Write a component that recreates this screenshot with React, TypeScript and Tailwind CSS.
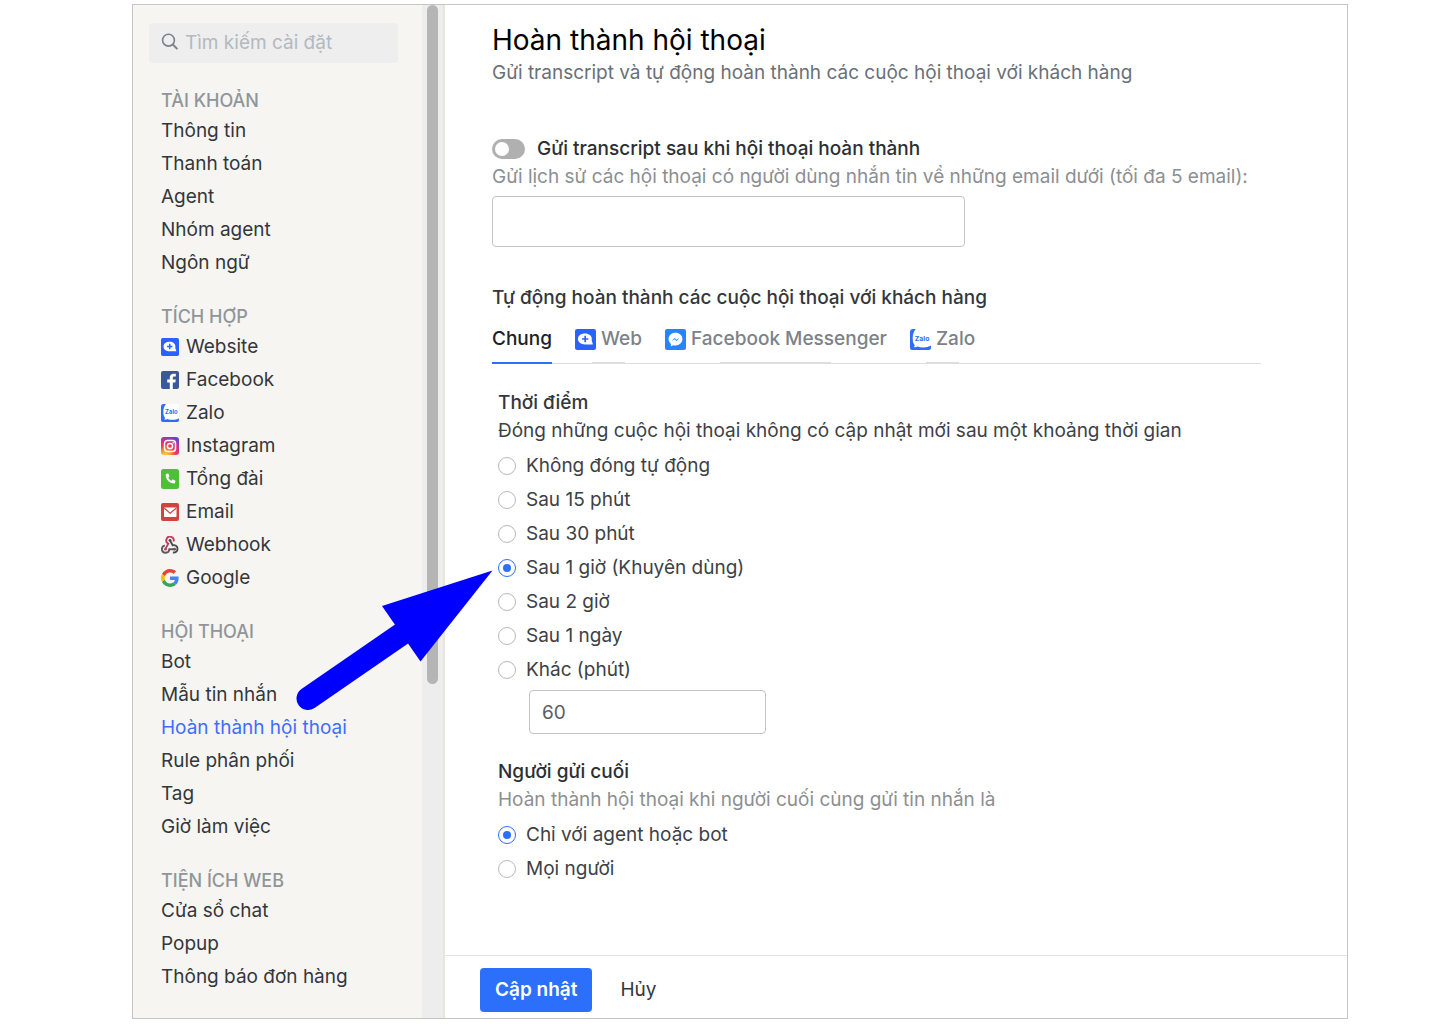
import { useState } from "react";
import type { ReactNode } from "react";

type NavItem = { label: string; icon?: ReactNode };
type NavGroup = { title: string; items: NavItem[] };

function ChatPlusIcon({ className }: { className: string }) {
	return (
		<svg viewBox="0 0 20 20" className={className} aria-hidden="true">
			<rect width="20" height="20" rx="2" fill="#2962ff" />
			<path d="M9.6 4.2c3.800 0 6.400 2.200 6.400 5.200 0 1.200-.2 2 .3 3 .3.700.7 1.200.7 2.400H9.600c-4 0-6.800-2.200-6.800-5.400s2.800-5.200 6.800-5.200z" fill="#fff" />
			<path d="M9.7 6.500v6M6.700 9.500h6" stroke="#2962ff" strokeWidth="1.6" />
		</svg>
	);
}

function ZaloIcon({ className }: { className: string }) {
	return (
		<svg viewBox="0 0 20 20" className={className} aria-hidden="true">
			<path d="M3 0h3L10 10 20 15.500V18a2 2 0 0 1-2 2H2a2 2 0 0 1-2-2V3a3 3 0 0 1 3-3z" fill="#2f6df6" />
			<path d="M5.500 0H18a2 2 0 0 1 2 2v13.800c-3.500 2.200-9 2.300-13 .8-.9.500-2.300.9-3.700.6.700-.4 1.200-.9 1.300-1.600C3.200 14 2.600 12 2.600 9 2.600 5.500 3.400 2.500 5.500 0z" fill="#fff" />
			<text x="11.5" y="11" fontSize="6.500" fontWeight="700" textAnchor="middle" fill="#2f6df6">Zalo</text>
		</svg>
	);
}

function MessengerIcon({ className }: { className: string }) {
	return (
		<svg viewBox="0 0 20 20" className={className} aria-hidden="true">
			<rect width="20" height="20" rx="2" fill="#2684ff" />
			<path d="M10 3.600c-3.800 0-6.600 2.600-6.600 6 0 1.900.9 3.500 2.200 4.600v2.400l2.200-1.200c.7.200 1.400.3 2.200.3 3.800 0 6.600-2.700 6.600-6.100s-2.800-6-6.600-6z" fill="#fff" />
			<path d="M6.300 11.500l2.800-2.900 1.800 1.700 2.900-1.700-2.800 2.900-1.800-1.700z" fill="#2684ff" />
		</svg>
	);
}

function FacebookIcon() {
	return (
		<svg viewBox="0 0 18 18" className="size-[18px]" aria-hidden="true">
			<rect width="18" height="18" rx="2" fill="#3b5998" />
			<path d="M8.800 18v-6.500H6.200V8.500h2.600V6.600c0-2.500 1.500-3.900 3.800-3.900h2.200v2.800h-1.500c-1.100 0-1.500.6-1.500 1.500v1.500h3l-.5 3h-2.500V18z" fill="#fff" />
		</svg>
	);
}

function InstagramIcon() {
	return (
		<svg viewBox="0 0 18 18" className="size-[18px]" aria-hidden="true">
			<defs>
				<radialGradient id="ig" cx="0.25" cy="1.05" r="1.150">
					<stop offset="0" stopColor="#ffd45c" />
					<stop offset="0.250" stopColor="#ff9a3d" />
					<stop offset="0.5" stopColor="#f5384e" />
					<stop offset="0.750" stopColor="#cc2f93" />
					<stop offset="1" stopColor="#5b46d8" />
				</radialGradient>
			</defs>
			<rect width="18" height="18" rx="3" fill="url(#ig)" />
			<rect x="3.500" y="3.500" width="11" height="11" rx="3" fill="none" stroke="#fff" strokeWidth="1.500" />
			<circle cx="9" cy="9" r="2.600" fill="none" stroke="#fff" strokeWidth="1.500" />
			<circle cx="12.200" cy="5.800" r="0.800" fill="#fff" />
		</svg>
	);
}

function PhoneIcon() {
	return (
		<svg viewBox="0 0 18 20" className="h-5 w-[18px]" aria-hidden="true">
			<rect width="18" height="20" rx="2.500" fill="#4fbf3a" />
			<path d="M5.200 5.100l1.600-.5c.4-.1.700.1.800.4l.8 2c.1.300 0 .6-.2.800l-1 .8c.7 1.500 1.800 2.600 3.200 3.200l.8-1c.2-.3.500-.3.800-.2l2 .9c.3.100.4.400.4.800l-.5 1.600c-.1.400-.4.600-.7.600-4.600 0-8.500-3.900-8.500-8.700 0-.4.200-.6.500-.7z" fill="#fff" />
		</svg>
	);
}

function EmailIcon() {
	return (
		<svg viewBox="0 0 18 18" className="size-[18px]" aria-hidden="true">
			<rect width="18" height="18" rx="2" fill="#d0433f" />
			<rect x="3" y="4.500" width="12.500" height="9.500" rx="0.800" fill="#fff" />
			<path d="M3.300 5.200l5.900 5 5.900-5" fill="none" stroke="#d0433f" strokeWidth="1.200" />
		</svg>
	);
}

function WebhookIcon() {
	return (
		<svg viewBox="0 0 18 18" className="size-[18px]" aria-hidden="true" fill="none" strokeWidth="1.900">
			<path d="M12.500 5.500A3.700 3.700 0 1 0 7.300 7.600L4.600 12.600" stroke="#c73a63" />
			<path d="M9 4.400l2.700 4.900a3.700 3.700 0 1 1 .2 7.100" stroke="#4b4b4b" />
			<path d="M3.800 9.500a3.700 3.700 0 1 0 4.500 3.800h5.200" stroke="#5a5a5a" />
			<circle cx="4.500" cy="13.200" r="1.400" fill="#c73a63" stroke="none" />
			<circle cx="9" cy="4.300" r="1.400" fill="#4b4b4b" stroke="none" />
			<circle cx="13.600" cy="13.200" r="1.400" fill="#5a5a5a" stroke="none" />
		</svg>
	);
}

function GoogleIcon() {
	return (
		<svg viewBox="0 0 48 48" className="size-[18px]" aria-hidden="true">
			<path fill="#EA4335" d="M24 9.500c3.540 0 6.710 1.220 9.210 3.600l6.850-6.850C35.900 2.380 30.470 0 24 0 14.620 0 6.510 5.380 2.560 13.220l7.980 6.190C12.430 13.720 17.740 9.500 24 9.500z" />
			<path fill="#4285F4" d="M46.980 24.550c0-1.570-.15-3.090-.38-4.550H24v9.020h12.940c-.58 2.960-2.260 5.480-4.780 7.180l7.730 6c4.510-4.180 7.090-10.360 7.090-17.650z" />
			<path fill="#FBBC05" d="M10.530 28.590c-.48-1.450-.76-2.990-.76-4.590s.27-3.140.76-4.590l-7.980-6.190C.92 16.460 0 20.120 0 24c0 3.880.92 7.540 2.560 10.780l7.970-6.190z" />
			<path fill="#34A853" d="M24 48c6.480 0 11.930-2.130 15.890-5.810l-7.730-6c-2.150 1.450-4.920 2.300-8.160 2.300-6.260 0-11.570-4.220-13.470-9.910l-7.980 6.190C6.510 42.620 14.620 48 24 48z" />
		</svg>
	);
}

function SearchIcon() {
	return (
		<svg viewBox="0 0 18 20" className="h-5 w-[18px] shrink-0" aria-hidden="true" fill="none" stroke="#7b8288" strokeWidth="1.600">
			<circle cx="7.500" cy="7.200" r="5.900" />
			<path d="M11.600 11.300l4.800 4.800" strokeWidth="2" />
		</svg>
	);
}

const navGroups: NavGroup[] = [
	{
		title: "TÀI KHOẢN",
		items: [{ label: "Thông tin" }, { label: "Thanh toán" }, { label: "Agent" }, { label: "Nhóm agent" }, { label: "Ngôn ngữ" }],
	},
	{
		title: "TÍCH HỢP",
		items: [
			{ label: "Website", icon: <ChatPlusIcon className="size-[18px]" /> },
			{ label: "Facebook", icon: <FacebookIcon /> },
			{ label: "Zalo", icon: <ZaloIcon className="size-[18px]" /> },
			{ label: "Instagram", icon: <InstagramIcon /> },
			{ label: "Tổng đài", icon: <PhoneIcon /> },
			{ label: "Email", icon: <EmailIcon /> },
			{ label: "Webhook", icon: <WebhookIcon /> },
			{ label: "Google", icon: <GoogleIcon /> },
		],
	},
	{
		title: "HỘI THOẠI",
		items: [
			{ label: "Bot" },
			{ label: "Mẫu tin nhắn" },
			{ label: "Hoàn thành hội thoại" },
			{ label: "Rule phân phối" },
			{ label: "Tag" },
			{ label: "Giờ làm việc" },
		],
	},
	{
		title: "TIỆN ÍCH WEB",
		items: [{ label: "Cửa sổ chat" }, { label: "Popup" }, { label: "Thông báo đơn hàng" }],
	},
];

const tabs: NavItem[] = [
	{ label: "Chung" },
	{ label: "Web", icon: <ChatPlusIcon className="size-[21px]" /> },
	{ label: "Facebook Messenger", icon: <MessengerIcon className="size-[21px]" /> },
	{ label: "Zalo", icon: <ZaloIcon className="size-[21px]" /> },
];

const closeOptions = [
	"Không đóng tự động",
	"Sau 15 phút",
	"Sau 30 phút",
	"Sau 1 giờ (Khuyên dùng)",
	"Sau 2 giờ",
	"Sau 1 ngày",
	"Khác (phút)",
];

const senderOptions = ["Chỉ với agent hoặc bot", "Mọi người"];

function Sidebar() {
	return (
		<aside className="flex w-[312px] shrink-0 border-r-2 border-[#e8e4de] bg-[#f6f5f1]">
			<div className="flex-1 pt-[18px] pl-4">
				<label className="mr-6 flex h-10 items-center gap-1.5 rounded bg-[#eeeeee] px-3">
					<SearchIcon />
					<input
						type="search"
						aria-label="Tìm kiếm cài đặt"
						placeholder="Tìm kiếm cài đặt"
						className="w-full min-w-0 bg-transparent outline-none placeholder:text-[#b3b9c0]"
					/>
				</label>
				<nav className="mt-6 flex flex-col gap-6 pl-3">
					{navGroups.map((group) => (
						<div key={group.title}>
							<h2 className="text-[18px] leading-[27px] font-medium text-[#8f969b]">{group.title}</h2>
							<ul>
								{group.items.map((item) => (
									<li key={item.label}>
										<a
											href="#"
											className={`flex h-[33px] items-center gap-[7px] ${item.label === "Hoàn thành hội thoại" ? "text-[#3f6dff]" : "text-[#33373b]"}`}
										>
											{item.icon}
											{item.label}
										</a>
									</li>
								))}
							</ul>
						</div>
					))}
				</nav>
			</div>
			<div className="flex w-[21px] flex-col bg-[#ededed] px-[5px]">
				<div className="h-[67%] rounded-full bg-[#b5b5b5]" />
			</div>
		</aside>
	);
}

type RadioListProps = { name: string; options: string[]; value: string; onChange: (v: string) => void };

function RadioList({ name, options, value, onChange }: RadioListProps) {
	return (
		<div>
			{options.map((option) => (
				<label key={option} className="flex h-[34px] items-center gap-[10px] text-[#3d4146]">
					<input
						type="radio"
						name={name}
						checked={value === option}
						onChange={() => onChange(option)}
						className="grid size-[18px] appearance-none place-content-center rounded-full border border-[#b9b9b9] bg-white before:size-2 before:rounded-full checked:border-[#2b70fa] checked:before:bg-[#2b70fa]"
					/>
					{option}
				</label>
			))}
		</div>
	);
}

export default function App() {
	const [sendTranscript, setSendTranscript] = useState(false);
	const [emails, setEmails] = useState("");
	const [activeTab, setActiveTab] = useState("Chung");
	const [closeAfter, setCloseAfter] = useState(closeOptions[3]);
	const [minutes, setMinutes] = useState("60");
	const [lastSender, setLastSender] = useState(senderOptions[0]);

	return (
		<div className="flex min-h-screen bg-white pt-1 pr-[92px] pb-[5px] pl-[132px] font-['Inter',sans-serif] text-[19px] leading-7">
			<div className="relative flex w-full border border-[#c6c6c6]">
				<Sidebar />
				<main className="flex min-w-0 flex-1 flex-col">
					<div className="flex-1 pt-4 pr-[86px] pl-[47px]">
						<h1 className="text-[28px] leading-[38px] text-black">Hoàn thành hội thoại</h1>
						<p className="text-[#6a7076]">Gửi transcript và tự động hoàn thành các cuộc hội thoại với khách hàng</p>

						<label className="mt-12 flex items-center gap-3 font-medium text-[#2b2f33]">
							<input
								type="checkbox"
								role="switch"
								checked={sendTranscript}
								onChange={(e) => setSendTranscript(e.target.checked)}
								className="flex h-5 w-[33px] appearance-none items-center rounded-full bg-[#b0b0b0] px-[3px] before:size-[14px] before:rounded-full before:bg-white checked:justify-end checked:bg-[#2b70fa]"
							/>
							Gửi transcript sau khi hội thoại hoàn thành
						</label>
						<label htmlFor="emails" className="block text-[#8c8f92]">
							Gửi lịch sử các hội thoại có người dùng nhắn tin về những email dưới (tối đa 5 email):
						</label>
						<input
							id="emails"
							type="text"
							value={emails}
							onChange={(e) => setEmails(e.target.value)}
							className="mt-[5px] block h-[51px] w-full max-w-[473px] rounded border border-[#c4c4c4] px-3"
						/>

						<h2 className="mt-[37px] font-medium text-[#33373b]">Tự động hoàn thành các cuộc hội thoại với khách hàng</h2>
						<div role="tablist" className="mt-[13px] flex gap-[23px] border-b border-[#dcdce2]">
							{tabs.map((tab) => (
								<button
									key={tab.label}
									type="button"
									role="tab"
									aria-selected={activeTab === tab.label}
									onClick={() => setActiveTab(tab.label)}
									className={`relative flex h-[38px] items-start gap-[5px] font-medium ${activeTab === tab.label ? "text-[#1d2125]" : "text-[#7c8288]"}`}
								>
									{tab.icon && <span className="flex h-7 items-center">{tab.icon}</span>}
									{tab.label}
									<span
										className={`absolute ${activeTab === tab.label ? "-bottom-px left-0 h-0.5 w-full bg-[#2b70fa]" : "bottom-0 left-1/4 h-px w-1/2 bg-[#dcdce2]"}`}
									/>
								</button>
							))}
						</div>

						<section className="mt-[25px] pl-1.5">
							<h3 className="font-medium text-[#33373b]">Thời điểm</h3>
							<p className="mb-1 text-[#3d4146]">Đóng những cuộc hội thoại không có cập nhật mới sau một khoảng thời gian</p>
							<RadioList name="close-after" options={closeOptions} value={closeAfter} onChange={setCloseAfter} />
							<input
								type="text"
								aria-label="Số phút"
								value={minutes}
								onChange={(e) => setMinutes(e.target.value)}
								className="mt-[3px] ml-[31px] block h-11 w-[237px] rounded border border-[#c4c4c4] px-3 text-[#5a5e62]"
							/>
						</section>

						<section className="mt-6 pl-1.5">
							<h3 className="font-medium text-[#2b2f33]">Người gửi cuối</h3>
							<p className="mb-1 text-[#8c8f92]">Hoàn thành hội thoại khi người cuối cùng gửi tin nhắn là</p>
							<RadioList name="last-sender" options={senderOptions} value={lastSender} onChange={setLastSender} />
						</section>
					</div>
					<footer className="flex items-center gap-7 border-t border-[#e4e4e4] px-[35px] pt-3 pb-1.5">
						<button type="button" className="h-11 rounded bg-[#2b6ffb] px-[15px] font-semibold text-white">Cập nhật</button>
						<button type="button" className="text-[#33373b]">Hủy</button>
					</footer>
				</main>
				{/* pointer to the recommended option */}
				<svg
					viewBox="296 569 198 142"
					className="pointer-events-none absolute top-[564px] left-[163px] h-[142px] w-[198px]"
					aria-hidden="true"
				>
					<path d="M308 698.500L403 633" stroke="#0000ff" strokeWidth="23" strokeLinecap="round" />
					<path d="M492.500 570.500L382 606L420.500 661.500z" fill="#0000ff" />
				</svg>
			</div>
		</div>
	);
}
